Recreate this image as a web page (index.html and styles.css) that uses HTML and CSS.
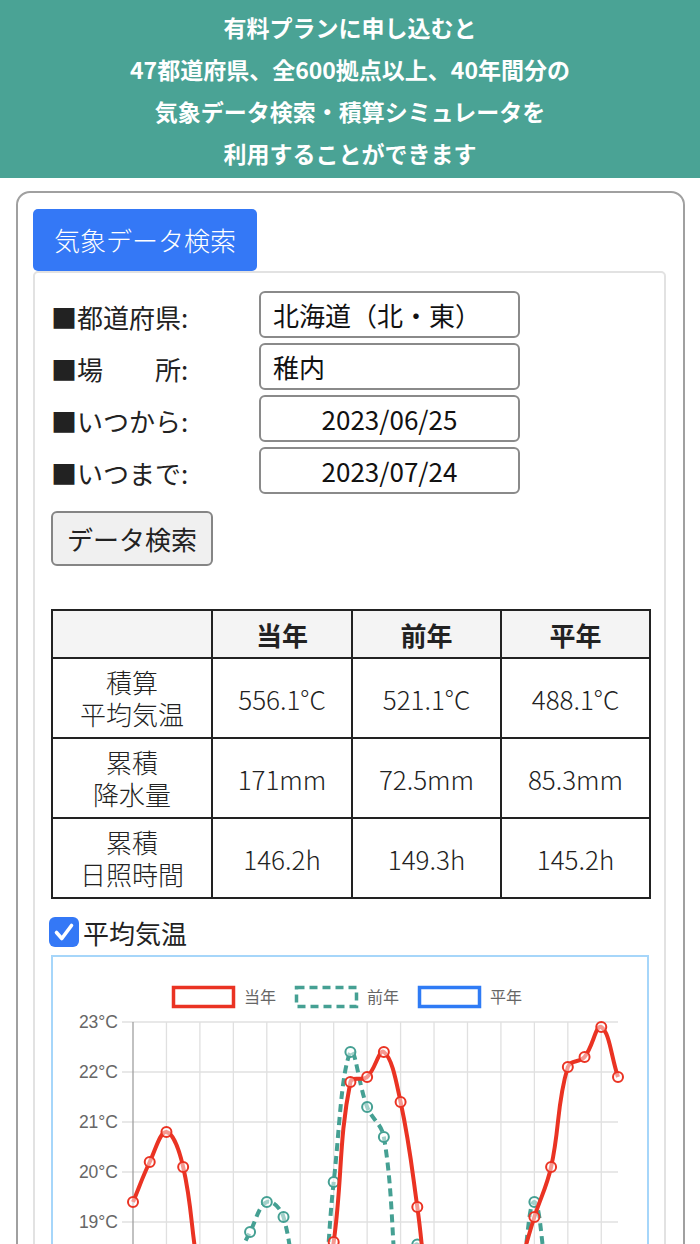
FILE: index.html
```html
<!DOCTYPE html>
<html lang="ja">
<head>
<meta charset="utf-8">
<title>気象データ検索</title>
<link rel="stylesheet" href="styles.css">
</head>
<body>
<header class="promo">
  <p>有料プランに申し込むと</p>
  <p>47都道府県、全600拠点以上、40年間分の</p>
  <p>気象データ検索・積算シミュレータを</p>
  <p>利用することができます</p>
</header>
<main class="card">
  <div class="tabs"><div class="tab">気象データ検索</div></div>
  <section class="panel">
    <div class="form">
      <div class="row"><span class="label">■都道府県:</span><div class="field">北海道（北・東）</div></div>
      <div class="row"><span class="label">■場　　所:</span><div class="field">稚内</div></div>
      <div class="row"><span class="label">■いつから:</span><div class="field date">2023/06/25</div></div>
      <div class="row"><span class="label">■いつまで:</span><div class="field date">2023/07/24</div></div>
    </div>
    <button class="search" type="button">データ検索</button>
    <table class="stats">
      <colgroup><col class="c-head"><col class="c-val"><col class="c-val2"><col class="c-val2"></colgroup>
      <thead>
        <tr><th></th><th>当年</th><th>前年</th><th>平年</th></tr>
      </thead>
      <tbody>
        <tr><th><span class="l1">積算</span><span class="l2">平均気温</span></th><td>556.1°C</td><td>521.1°C</td><td>488.1°C</td></tr>
        <tr><th><span class="l1">累積</span><span class="l2">降水量</span></th><td>171mm</td><td>72.5mm</td><td>85.3mm</td></tr>
        <tr><th><span class="l1">累積</span><span class="l2">日照時間</span></th><td>146.2h</td><td>149.3h</td><td>145.2h</td></tr>
      </tbody>
    </table>
    <label class="check">
      <span class="box"><svg viewBox="0 0 30 30" width="30" height="30"><path d="M7.5 15.5 L12.8 21.5 L22.5 8.5" class="tick"/></svg></span>
      <span>平均気温</span>
    </label>
    <div class="chart">
      <svg id="temp-chart" width="594" height="600" viewBox="0 0 594 600">
        <g id="grid"></g>
        <g class="legend">
          <rect x="120.5" y="30.5" width="60" height="19" class="lg lg-now"/>
          <text x="191" y="46">当年</text>
          <rect x="243.5" y="30.5" width="60" height="19" class="lg lg-prev"/>
          <text x="314" y="46">前年</text>
          <rect x="366.5" y="30.5" width="60" height="19" class="lg lg-avg"/>
          <text x="437" y="46">平年</text>
        </g>
        <g class="ylabels">
          <text x="65" y="71">23°C</text>
          <text x="65" y="121">22°C</text>
          <text x="65" y="171">21°C</text>
          <text x="65" y="221">20°C</text>
          <text x="65" y="271">19°C</text>
        </g>
        <g id="plot"></g>
      </svg>
    </div>
  </section>
</main>
<script src="chart.js"></script>
</body>
</html>
```
FILE: styles.css
```css
* { box-sizing: border-box; }
html, body { margin: 0; padding: 0; background: #fff; }
body {
  width: 700px;
  height: 1244px;
  overflow: hidden;
  font-family: "Noto Sans CJK JP", "Noto Sans", sans-serif;
  color: #222;
}
.promo {
  background: #4aa395;
  color: #fff;
  font-weight: 700;
  font-size: 23px;
  line-height: 42px;
  text-align: center;
  height: 178px;
  padding-top: 6px;
}
.promo p { margin: 0; }
.card {
  margin: 13px 15px 0 16px;
  border: 2px solid #a0a0a0;
  border-radius: 14px;
  padding: 16px 17px 0 15px;
}
.tabs { display: flex; height: 62px; }
.tab {
  width: 224px;
  height: 62px;
  background: #3478f6;
  color: #fff;
  border-radius: 5px;
  font-size: 26px;
  font-weight: 300;
  line-height: 62px;
  text-align: center;
}
.panel {
  border: 2px solid #e2e2e2;
  border-radius: 5px;
  padding: 18px 15px 40px 16px;
}
.form { display: flex; flex-direction: column; gap: 5px; }
.row { display: flex; align-items: center; height: 47px; }
.label { width: 208px; font-size: 26px; color: #222; padding-top: 4px; }
.field {
  width: 261px;
  height: 47px;
  border: 2px solid #8a8a8a;
  border-radius: 6px;
  font-size: 26px;
  line-height: 43px;
  padding: 0 12px;
  color: #111;
}
.field.date { text-align: center; }
.search {
  display: block;
  margin-top: 17px;
  width: 162px;
  height: 55px;
  padding: 0;
  background: #f0f0f0;
  border: 2px solid #858585;
  border-radius: 6px;
  font-family: "Noto Sans CJK JP", "Noto Sans", sans-serif;
  font-size: 26px;
  color: #222;
}
.stats {
  margin-top: 43px;
  width: 598px;
  border-collapse: collapse;
  table-layout: fixed;
}
.c-head { width: 160px; }
.c-val { width: 140px; }
.c-val2 { width: 149px; }
.stats th, .stats td {
  border: 2px solid #222;
  text-align: center;
  padding: 0;
  font-size: 26px;
  color: #222;
}
.stats thead th { height: 48px; background: #f4f4f4; font-weight: 700; }
.stats tbody th, .stats tbody td { height: 80px; font-weight: 300; }
.stats tbody th { line-height: 32px; }
.l1, .l2 { display: block; height: 32px; }
.check {
  display: flex;
  align-items: center;
  gap: 4px;
  margin: 18px 0 0 -2px;
  height: 30px;
  font-size: 26px;
  color: #222;
}
.box {
  width: 30px;
  height: 30px;
  border-radius: 6px;
  background: #3478f6;
  display: flex;
}
.tick { fill: none; stroke: #fff; stroke-width: 3.6; stroke-linecap: round; stroke-linejoin: round; }
.chart {
  margin-top: 8px;
  border: 2px solid #a6d6fa;
}
.chart svg { display: block; }
.legend text {
  font-family: "Noto Sans CJK JP", sans-serif;
  font-size: 16px;
  fill: #666;
}
.lg { fill: #fff; stroke-width: 3.5; }
.lg-now { stroke: #ea3323; }
.lg-prev { stroke: #45a093; stroke-dasharray: 8 5; }
.lg-avg { stroke: #2f7bf5; }
.ylabels text {
  font-family: "Liberation Sans", Arial, sans-serif;
  font-size: 17.5px;
  fill: #666;
  text-anchor: end;
}
.grid-line { stroke: #e0e0e0; stroke-width: 1.3; }
.axis-line { stroke: #a0a0a0; stroke-width: 1.3; }
.series { fill: none; stroke-width: 4; stroke-linejoin: round; }
.s-now { stroke: #ea3323; }
.s-prev { stroke: #45a093; stroke-width: 4; stroke-dasharray: 8 5; }
.s-avg { stroke: #2f7bf5; }
.pt { fill: rgba(255, 255, 255, 0.5); stroke-width: 2; }
.pt-now { stroke: #ea3323; }
.pt-prev { stroke: #45a093; }
.pt-avg { stroke: #2f7bf5; }
```
FILE: chart.js
```js
(function () {
  var NS = 'http://www.w3.org/2000/svg';
  var grid = document.getElementById('grid');
  var plot = document.getElementById('plot');
  var X0 = 80, X1 = 565, N = 30, STEP = (X1 - X0) / (N - 1);
  var TOP = 65, PER = 50, BOTTOM = 600;

  function el(name, attrs, parent) {
    var e = document.createElementNS(NS, name);
    for (var k in attrs) { e.setAttribute(k, attrs[k]); }
    parent.appendChild(e);
    return e;
  }

  var k, i;
  for (k = 0; k <= 11; k++) {
    var y = TOP + PER * k;
    el('line', { x1: 69, x2: X1, y1: y, y2: y, 'class': 'grid-line' }, grid);
  }
  for (i = 2; i < N; i += 2) {
    var x = X0 + STEP * i;
    el('line', { x1: x, x2: x, y1: TOP, y2: BOTTOM, 'class': 'grid-line' }, grid);
  }
  el('line', { x1: X0, x2: X0, y1: TOP, y2: BOTTOM, 'class': 'axis-line' }, grid);

  var series = [
    { key: 'avg', data: [16.1, 16.0, 16.2, 16.3, 16.2, 16.4, 16.5, 16.4, 16.6, 16.5, 16.7, 16.6, 16.8, 16.9, 16.8, 17.0, 17.1, 17.0, 17.2, 17.1, 17.3, 17.2, 17.4, 17.3, 17.5, 17.4, 17.6, 17.5, 17.7, 17.6] },
    { key: 'prev', data: [16.0, 15.8, 16.2, 16.5, 16.9, 17.2, 18.1, 18.8, 19.4, 19.1, 17.0, 16.4, 19.8, 22.4, 21.3, 20.7, 17.45, 18.55, 16.8, 16.0, 15.8, 16.3, 16.9, 17.5, 19.4, 17.4, 16.6, 16.2, 16.0, 16.3] },
    { key: 'now', data: [19.4, 20.2, 20.8, 20.1, 17.9, 17.0, 16.6, 16.8, 17.2, 16.9, 16.4, 17.0, 18.6, 21.8, 21.9, 22.4, 21.4, 19.3, 16.6, 15.9, 16.2, 16.8, 17.1, 18.0, 19.1, 20.1, 22.1, 22.3, 22.9, 21.9] }
  ];

  function toPoints(data) {
    return data.map(function (v, j) { return { x: X0 + STEP * j, y: TOP + (23 - v) * PER }; });
  }

  function pathFor(p, t) {
    var cps = p.map(function (cur, j) {
      var prev = p[j - 1] || cur, next = p[j + 1] || cur;
      var d01 = Math.hypot(cur.x - prev.x, cur.y - prev.y);
      var d12 = Math.hypot(next.x - cur.x, next.y - cur.y);
      var s01 = d01 / (d01 + d12) || 0, s12 = d12 / (d01 + d12) || 0;
      var fa = t * s01, fb = t * s12;
      return {
        px: cur.x - fa * (next.x - prev.x), py: cur.y - fa * (next.y - prev.y),
        nx: cur.x + fb * (next.x - prev.x), ny: cur.y + fb * (next.y - prev.y)
      };
    });
    var d = 'M' + p[0].x.toFixed(2) + ' ' + p[0].y.toFixed(2);
    for (var j = 1; j < p.length; j++) {
      d += ' C' + cps[j - 1].nx.toFixed(2) + ' ' + cps[j - 1].ny.toFixed(2) + ' ' +
        cps[j].px.toFixed(2) + ' ' + cps[j].py.toFixed(2) + ' ' +
        p[j].x.toFixed(2) + ' ' + p[j].y.toFixed(2);
    }
    return d;
  }

  series.forEach(function (s) {
    var p = toPoints(s.data);
    el('path', { d: pathFor(p, 0.4), 'class': 'series s-' + s.key }, plot);
    p.forEach(function (pt) {
      el('circle', { cx: pt.x.toFixed(2), cy: pt.y.toFixed(2), r: 5, 'class': 'pt pt-' + s.key }, plot);
    });
  });
})();
```
